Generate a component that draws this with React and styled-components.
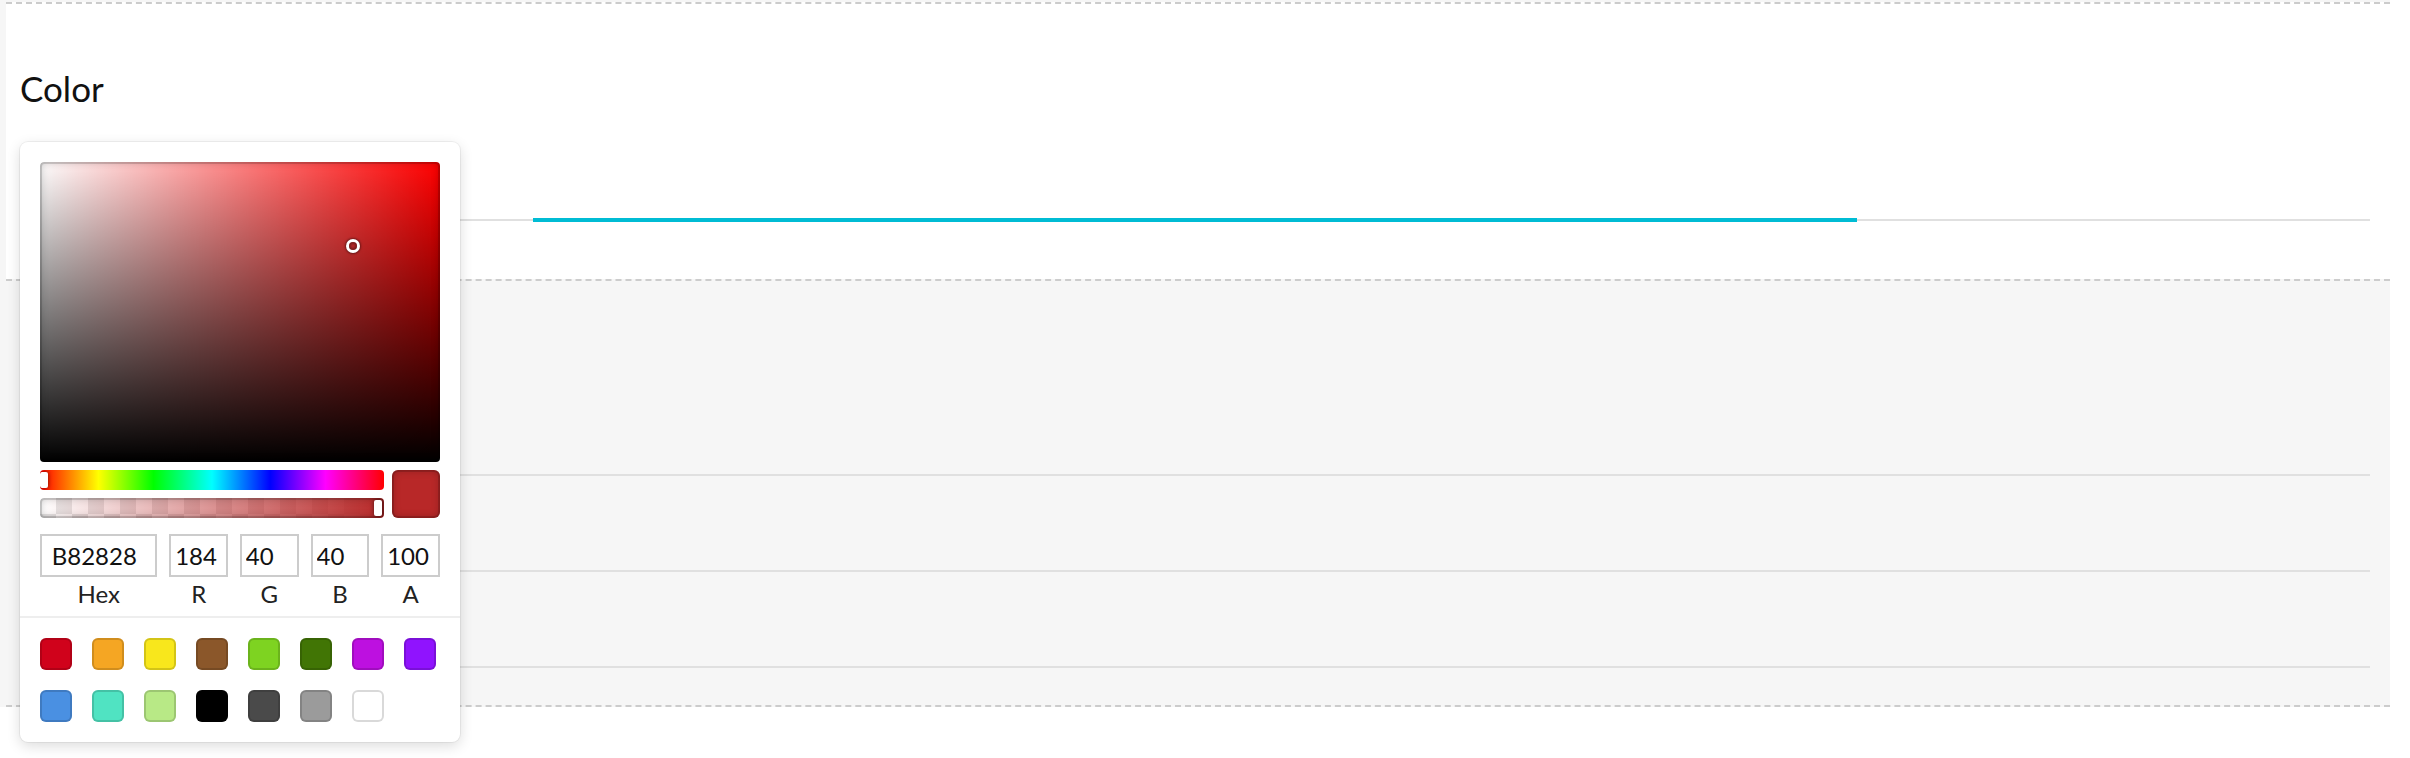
import React from 'react';
import styled, { createGlobalStyle } from 'styled-components';

const GlobalStyle = createGlobalStyle`
  html, body {
    margin: 0;
    padding: 0;
    background: #fff;
  }
  body {
    font-family: Lato, "Open Sans", sans-serif;
    color: #111;
  }
`;

const current = { r: 184, g: 40, b: 40, a: 100 };

const presetColors = [
  '#D0021B', '#F5A623', '#F8E71C', '#8B572A', '#7ED321', '#417505', '#BD10E0', '#9013FE',
  '#4A90E2', '#50E3C2', '#B8E986', '#000000', '#4A4A4A', '#9B9B9B', '#FFFFFF',
];

const toHex = ({ r, g, b }) =>
  [r, g, b].map((v) => v.toString(16).padStart(2, '0')).join('').toUpperCase();

const toHsv = ({ r, g, b }) => {
  const max = Math.max(r, g, b);
  const min = Math.min(r, g, b);
  const d = max - min;
  let h = 0;
  if (d) {
    if (max === r) h = ((g - b) / d) % 6;
    else if (max === g) h = (b - r) / d + 2;
    else h = (r - g) / d + 4;
    h *= 60;
    if (h < 0) h += 360;
  }
  return { h, s: max ? d / max : 0, v: max / 255 };
};

const App = () => {
  const hsv = toHsv(current);
  const rgb = `rgb(${current.r}, ${current.g}, ${current.b})`;
  const fields = [
    { label: 'hex', value: toHex(current), wide: true },
    { label: 'r', value: current.r },
    { label: 'g', value: current.g },
    { label: 'b', value: current.b },
    { label: 'a', value: current.a },
  ];

  return (
    <>
      <GlobalStyle />
      <Page>
        <Sheet>
          <FieldPanel>
            <Title>Color</Title>
            <RangeTrack>
              <Rail />
              <Selection $width={56.34} />
              <Rail />
            </RangeTrack>
          </FieldPanel>
          <ListPanel>
            <Row $height={193} />
            <Row $height={94} />
            <Row $height={94} />
          </ListPanel>
        </Sheet>

        <Picker>
          <Saturation $hue={hsv.h}>
            <Pointer style={{ left: `${hsv.s * 100}%`, top: `${(1 - hsv.v) * 100}%` }} />
          </Saturation>
          <Controls>
            <Sliders>
              <HueBar>
                <Thumb $pos="0px" />
              </HueBar>
              <AlphaBar $rgb={`${current.r}, ${current.g}, ${current.b}`}>
                <Thumb $pos="calc(100% - 10px)" />
              </AlphaBar>
            </Sliders>
            <Preview $color={rgb} />
          </Controls>
          <Fields>
            {fields.map((f) => (
              <Field key={f.label} $wide={f.wide}>
                <Input defaultValue={f.value} />
                <Label>{f.label}</Label>
              </Field>
            ))}
          </Fields>
          <Presets>
            {presetColors.map((c) => (
              <Preset key={c} $color={c} />
            ))}
          </Presets>
        </Picker>
      </Page>
    </>
  );
};

export default App;

const Page = styled.div`
  position: relative;
  width: 2390px;
  min-height: 758px;
  background: #fff;
`;

const Sheet = styled.div`
  padding: 2px 0 0 6px;
  background: #f6f6f6;
`;

const FieldPanel = styled.section`
  box-sizing: border-box;
  height: 277px;
  padding: 63px 20px 0 14px;
  background: #fff;
  border-top: 2px dashed #cccccc;
`;

const Title = styled.h2`
  margin: 0;
  font-size: 35px;
  font-weight: 400;
  line-height: 42px;
  color: #111;
`;

const RangeTrack = styled.div`
  display: flex;
  align-items: center;
  height: 4px;
  margin-top: 109px;
`;

const Rail = styled.div`
  flex: 1;
  height: 2px;
  background: #e0e0e0;
`;

const Selection = styled.div`
  width: ${(p) => p.$width}%;
  height: 4px;
  background: #00bcd4;
`;

const ListPanel = styled.section`
  padding: 0 20px 37px 14px;
  background: #f6f6f6;
  border-top: 2px dashed #cccccc;
  border-bottom: 2px dashed #cccccc;
`;

const Row = styled.div`
  height: ${(p) => p.$height}px;
  border-bottom: 2px solid #e0e0e0;
`;

const Picker = styled.div`
  position: absolute;
  left: 20px;
  top: 142px;
  z-index: 2;
  width: 400px;
  padding: 20px 20px 0;
  background: #fff;
  border-radius: 8px;
  box-shadow: 0 0 0 1px rgba(0, 0, 0, 0.05), 0 4px 14px rgba(0, 0, 0, 0.14);
`;

const Saturation = styled.div`
  position: relative;
  height: 300px;
  border-radius: 4px;
  overflow: hidden;
  background: linear-gradient(to top, #000, rgba(0, 0, 0, 0)),
    linear-gradient(to right, #fff, rgba(255, 255, 255, 0)),
    hsl(${(p) => p.$hue}, 100%, 50%);
  box-shadow: inset 0 0 0 2px rgba(0, 0, 0, 0.15), inset 0 0 8px rgba(0, 0, 0, 0.25);
`;

const Pointer = styled.div`
  position: absolute;
  width: 8px;
  height: 8px;
  border-radius: 50%;
  transform: translate(-4px, -4px);
  box-shadow: 0 0 0 3px #fff, inset 0 0 2px 2px rgba(0, 0, 0, 0.3),
    0 0 2px 4px rgba(0, 0, 0, 0.4);
`;

const Controls = styled.div`
  display: flex;
`;

const Sliders = styled.div`
  flex: 1;
  padding: 8px 0;
`;

const HueBar = styled.div`
  position: relative;
  height: 20px;
  border-radius: 4px;
  overflow: hidden;
  background: linear-gradient(
    to right,
    #f00 0%,
    #ff0 17%,
    #0f0 33%,
    #0ff 50%,
    #00f 67%,
    #f0f 83%,
    #f00 100%
  );
`;

const AlphaBar = styled.div`
  position: relative;
  height: 20px;
  margin-top: 8px;
  border-radius: 4px;
  overflow: hidden;
  background: linear-gradient(to right, rgba(${(p) => p.$rgb}, 0), rgba(${(p) => p.$rgb}, 1)),
    conic-gradient(#e6e6e6 25%, #fff 0 50%, #e6e6e6 0 75%, #fff 0) 0 0 / 32px 32px;
  box-shadow: inset 0 0 0 2px rgba(0, 0, 0, 0.15), inset 0 0 8px rgba(0, 0, 0, 0.25);
`;

const Thumb = styled.div`
  position: absolute;
  top: 2px;
  left: ${(p) => p.$pos};
  width: 8px;
  height: 16px;
  border-radius: 2px;
  background: #fff;
  box-shadow: 0 0 4px rgba(0, 0, 0, 0.6);
`;

const Preview = styled.div`
  width: 48px;
  height: 48px;
  margin: 8px 0 0 8px;
  border-radius: 6px;
  background: ${(p) => p.$color};
  box-shadow: inset 0 0 0 2px rgba(0, 0, 0, 0.15), inset 0 0 8px rgba(0, 0, 0, 0.25);
`;

const Fields = styled.div`
  display: flex;
  padding-top: 8px;
`;

const Field = styled.div`
  flex: ${(p) => (p.$wide ? 2 : 1)};
  min-width: 0;
  padding-left: ${(p) => (p.$wide ? 0 : 12)}px;
`;

const Input = styled.input`
  box-sizing: border-box;
  display: block;
  width: 100%;
  height: 43px;
  padding: 0 10%;
  border: none;
  outline: none;
  background: #fff;
  box-shadow: inset 0 0 0 2px #cccccc;
  font-family: Lato, "Open Sans", sans-serif;
  font-size: 24px;
  color: #111;
`;

const Label = styled.span`
  display: block;
  padding: 2px 0 8px;
  text-align: center;
  text-transform: capitalize;
  font-size: 24px;
  line-height: 29px;
  color: #222;
`;

const Presets = styled.div`
  display: flex;
  flex-wrap: wrap;
  margin: 0 -20px;
  padding: 20px 0 0 20px;
  border-top: 2px solid #eeeeee;
`;

const Preset = styled.div`
  width: 32px;
  height: 32px;
  margin: 0 20px 20px 0;
  border-radius: 6px;
  background: ${(p) => p.$color};
  box-shadow: inset 0 0 0 2px rgba(0, 0, 0, 0.15);
`;
